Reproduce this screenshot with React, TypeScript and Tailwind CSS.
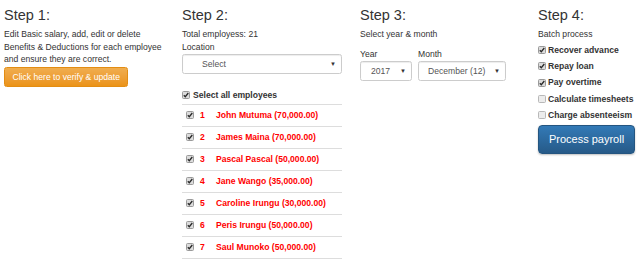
import type { ReactNode } from "react";

const employees = [
  { n: 1, name: "John Mutuma", pay: "70,000.00" },
  { n: 2, name: "James Maina", pay: "70,000.00" },
  { n: 3, name: "Pascal Pascal", pay: "50,000.00" },
  { n: 4, name: "Jane Wango", pay: "35,000.00" },
  { n: 5, name: "Caroline Irungu", pay: "30,000.00" },
  { n: 6, name: "Peris Irungu", pay: "50,000.00" },
  { n: 7, name: "Saul Munoko", pay: "50,000.00" },
  { n: 8, name: "Jane Muthoni", pay: "40,000.00" },
];

const batchOptions = [
  { label: "Recover advance", checked: true },
  { label: "Repay loan", checked: true },
  { label: "Pay overtime", checked: true },
  { label: "Calculate timesheets", checked: false },
  { label: "Charge absenteeism", checked: false },
];

function Check({ checked }: { checked: boolean }) {
  return (
    <span
      className={
        checked
          ? "inline-flex h-[8px] w-[8px] shrink-0 items-center justify-center rounded-[1.5px] border border-[#9a9a9a] bg-[#dcdcdc]"
          : "inline-flex h-[8px] w-[8px] shrink-0 items-center justify-center rounded-[1.5px] border border-[#b8b8b8] bg-[#ececec]"
      }
    >
      {checked ? (
        <svg width="6" height="6" viewBox="0 0 6 6" aria-hidden>
          <path d="M0.8 3.2 L2.3 4.7 L5.3 1" fill="none" stroke="#2a2a2a" strokeWidth="1.3" />
        </svg>
      ) : null}
    </span>
  );
}

function Heading({ children }: { children: ReactNode }) {
  return <h3 className="mt-[7px] mb-[5px] text-[14.5px] leading-[16px] font-normal text-[#333]">{children}</h3>;
}

function FakeSelect({ value, className, indent }: { value: string; className: string; indent: string }) {
  return (
    <div
      className={`flex h-[20px] items-center justify-between rounded-[2.5px] border border-[#ccc] bg-white pr-[5px] text-[#555] shadow-[inset_0_1px_1px_rgba(0,0,0,0.075)] ${className} ${indent}`}
    >
      <span>{value}</span>
      <span className="text-[6px] leading-none text-[#333]">▼</span>
    </div>
  );
}

export default function App() {
  return (
    <div className="h-screen overflow-hidden bg-white font-['Liberation_Sans',Arial,sans-serif] text-[8.6px] leading-[12.5px] text-[#333]">
      <div className="flex pl-[4px]">
        {/* Step 1 */}
        <div className="w-[178px] pr-[12px]">
          <Heading>Step 1:</Heading>
          <p className="w-[162px]">
            Edit Basic salary, add, edit or delete Benefits &amp; Deductions for each employee and ensure they are
            correct.
          </p>
          <button
            type="button"
            className="mt-[1.5px] h-[19.5px] rounded-[2.5px] border border-[#e38d13] bg-gradient-to-b from-[#f0ad4e] to-[#eb9316] px-[7.5px] text-white"
          >
            Click here to verify &amp; update
          </button>
        </div>

        {/* Step 2 */}
        <div className="w-[178px]">
          <Heading>Step 2:</Heading>
          <div>Total employess: 21</div>
          <div>Location</div>
          <FakeSelect value="Select" className="mt-[1px] w-[160px]" indent="pl-[19px]" />
          <label className="mt-[15px] flex items-center gap-[3px] font-bold">
            <Check checked />
            Select all employees
          </label>
          <div className="mt-[2px] w-[160px]">
            {employees.map((e) => (
              <div key={e.n} className="flex h-[22px] items-center border-t border-[#ddd] font-bold text-[#ff0000]">
                <span className="ml-[4px] flex w-[14px]">
                  <Check checked />
                </span>
                <span className="w-[16px]">{e.n}</span>
                <span>
                  {e.name} ({e.pay})
                </span>
              </div>
            ))}
          </div>
        </div>

        {/* Step 3 */}
        <div className="w-[178px]">
          <Heading>Step 3:</Heading>
          <div>Select year &amp; month</div>
          <div className="mt-[7px] flex gap-[6px]">
            <div>
              <div>Year</div>
              <FakeSelect value="2017" className="mt-[1px] w-[52px]" indent="pl-[10px]" />
            </div>
            <div>
              <div>Month</div>
              <FakeSelect value="December (12)" className="mt-[1px] w-[88px]" indent="pl-[9px]" />
            </div>
          </div>
        </div>

        {/* Step 4 */}
        <div className="w-[100px]">
          <Heading>Step 4:</Heading>
          <div>Batch process</div>
          <div className="mt-[1.5px]">
            {batchOptions.map((o) => (
              <label key={o.label} className="flex h-[16.25px] items-center gap-[2px] font-bold whitespace-nowrap">
                <Check checked={o.checked} />
                {o.label}
              </label>
            ))}
          </div>
          <button
            type="button"
            className="mt-[1.5px] h-[29px] w-[97px] rounded-[4px] border border-[#245580] bg-gradient-to-b from-[#337ab7] to-[#265a88] text-[11px] text-white shadow-[0_1px_2px_rgba(0,0,0,0.25)]"
          >
            Process payroll
          </button>
        </div>
      </div>
    </div>
  );
}
